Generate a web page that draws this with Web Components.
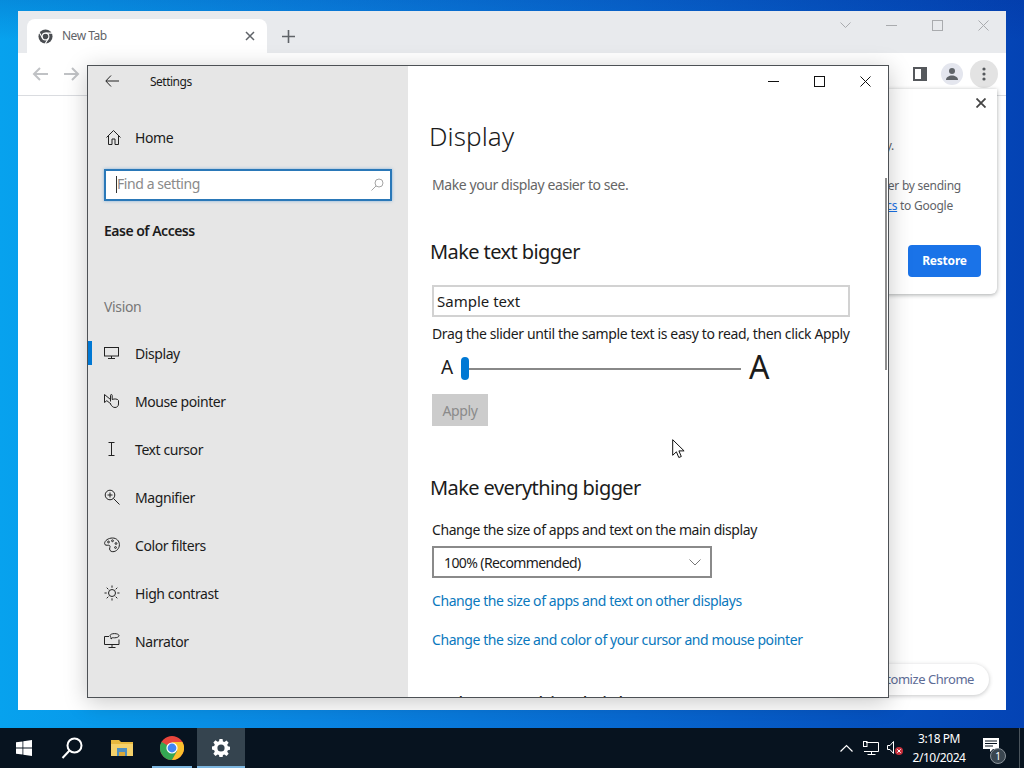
<!DOCTYPE html>
<html lang="en">
<head>
<meta charset="utf-8">
<title>Settings</title>
<style>
  html, body { margin: 0; padding: 0; }
  body { font-family: "Noto Sans", "Open Sans", sans-serif; }
</style>
</head>
<body>
<desk-top>
  <chrome-window></chrome-window>
  <settings-window>
    <nav-item label="Display" active>
      <svg slot="icon" width="15" height="16" viewBox="0 0 15 16" fill="none" stroke="#222"><rect x=".5" y="2.500" width="14" height="8.500"/><path d="M7.500 11v3M4 13.500h7"/></svg>
    </nav-item>
    <nav-item label="Mouse pointer">
      <svg slot="icon" width="16" height="16" viewBox="0 0 16 16" fill="none" stroke="#222"><path d="M.5 1.500v8l2.300-1.800 4.200 3.300"/><path d="M.5 1.500l6 5"/><path d="M6.500 8.500V2.400c0-1.200 1.700-1.200 1.700 0V6.500c2-1 5.800-.6 6.300 1v3.500c0 2.200-1.600 3.500-3.500 3.500-2.400 0-3.500-1.800-4.500-3.500"/></svg>
    </nav-item>
    <nav-item label="Text cursor">
      <svg slot="icon" width="15" height="16" viewBox="0 0 15 16" fill="none" stroke="#222"><path d="M4.500 1.500h6M4.500 14.500h6M7.500 1.500v13"/></svg>
    </nav-item>
    <nav-item label="Magnifier">
      <svg slot="icon" width="16" height="16" viewBox="0 0 16 16" fill="none" stroke="#222"><circle cx="6" cy="6" r="4.800"/><path d="M9.500 9.500l6 6M6 3.500v5M3.500 6h5"/></svg>
    </nav-item>
    <nav-item label="Color filters">
      <svg slot="icon" width="16" height="16" viewBox="0 0 16 16" fill="none" stroke="#222"><path d="M8.500 1C4.500 1 .6 3.500.6 6.500c0 2 2.300 1.800 3.700 1.700 1.500 0 2.200 1 1.500 2.500-.8 1.800.4 4 3 4 3.500 0 6.600-3.200 6.600-7S12.500 1 8.500 1z"/><circle cx="4.500" cy="5" r=".9"/><circle cx="8.500" cy="3.800" r=".9"/><circle cx="12" cy="6.500" r=".9"/><circle cx="11.500" cy="10.500" r=".9"/></svg>
    </nav-item>
    <nav-item label="High contrast">
      <svg slot="icon" width="16" height="16" viewBox="0 0 16 16" fill="none" stroke="#222"><circle cx="8" cy="8" r="3.500"/><path d="M8 .5v2.200M8 13.300v2.200M.5 8h2.200M13.300 8h2.200M2.700 2.700l1.600 1.600M11.700 11.700l1.600 1.600M13.300 2.700l-1.600 1.600M4.300 11.700l-1.600 1.600"/></svg>
    </nav-item>
    <nav-item label="Narrator">
      <svg slot="icon" width="16" height="16" viewBox="0 0 16 16" fill="none" stroke="#222"><path d="M5 3.500H.5v8h14.500V6.500M8 11.500v3M4.500 14.500h7"/><path d="M6 2.700C6 1.500 8 .6 10.500.6s4.500.9 4.500 2.100-2 2.100-4.500 2.100c-.6 0-1.200 0-1.700-.2L7 6V4.200C6.400 3.800 6 3.300 6 2.700z"/></svg>
    </nav-item>
  </settings-window>
  <task-bar></task-bar>
  <svg class="pointer" width="14" height="20" viewBox="0 0 14 20" style="position:absolute;left:672px;top:439px"><path d="M.7.700v15.600l3.700-3.500 2.400 5.700 2.500-1-2.400-5.600h5.200z" fill="#fff" stroke="#111" stroke-width="1"/></svg>
</desk-top>

<script>
class DeskTop extends HTMLElement {
  constructor() {
    super();
    this._shadowRoot = this.attachShadow({ mode: "open" });
  }
  connectedCallback() {
    this._shadowRoot.innerHTML = `
    <style>
      :host {
        display: block;
        position: relative;
        width: 1024px;
        height: 768px;
        overflow: hidden;
        background:
          linear-gradient(180deg, rgba(0,40,140,.18), rgba(0,40,140,0) 40px),
          linear-gradient(90deg, #07a2ee 0%, #0a86e2 30%, #0868d0 62%, #0443b4 100%);
      }
    </style>
    <slot></slot>
    `;
  }
}

class ChromeWindow extends HTMLElement {
  constructor() {
    super();
    this._shadowRoot = this.attachShadow({ mode: "open" });
  }
  connectedCallback() {
    this._shadowRoot.innerHTML = `
    <style>
      :host {
        position: absolute;
        left: 18px;
        top: 11px;
        width: 988px;
        height: 699px;
        display: flex;
        flex-direction: column;
        background: #fff;
        font-family: "Noto Sans", sans-serif;
      }
      .strip {
        height: 42px;
        background: #e8eaed;
        display: flex;
        align-items: flex-end;
        padding-left: 9px;
        box-sizing: border-box;
      }
      .tab {
        width: 240px;
        height: 34px;
        background: #fff;
        border-radius: 8px 8px 0 0;
        display: flex;
        align-items: center;
        padding: 0 12px 0 11px;
        box-sizing: border-box;
        gap: 9px;
        font-size: 12px;
        letter-spacing: -.5px;
        color: #5f6368;
      }
      .tab span { flex: 1; padding-bottom: 2px; }
      .plus { margin: 0 0 0 15px; align-self: center; position: relative; top: 4px; display: flex; }
      .caption {
        margin-left: auto;
        align-self: flex-start;
        display: flex;
      }
      .caption div { width: 46px; height: 28px; display: flex; align-items: center; justify-content: center; }
      .toolbar {
        height: 43px;
        box-sizing: border-box;
        padding: 0 8px 0 14px;
        border-bottom: 1px solid #dadce0;
        display: flex;
        align-items: center;
        gap: 16px;
      }
      .toolbar .right { margin-left: auto; display: flex; align-items: center; }
      .avatar { width: 22px; height: 22px; margin: 0 7px 0 14px; border-radius: 50%; background: #e4e6ee; display: flex; align-items: center; justify-content: center; }
      .menu { width: 28px; height: 28px; border-radius: 50%; background: #e3e3e3; display: flex; align-items: center; justify-content: center; }
      .page { flex: 1; position: relative; }
      .bubble {
        position: absolute;
        right: 9px;
        top: -7px;
        width: 300px;
        height: 205px;
        box-sizing: border-box;
        background: #fff;
        border-radius: 0 0 6px 6px;
        box-shadow: 0 1px 4px rgba(60,64,67,.45);
        font-size: 12px;
        letter-spacing: -.25px;
        line-height: 20px;
        color: #5f6368;
        text-align: right;
        padding: 47px 36px 0 0;
      }
      .bubble .close { position: absolute; right: 11px; top: 9px; display: flex; }
      .bubble p { margin: 0 0 20px; white-space: nowrap; }
      .bubble a { color: #1a73e8; text-decoration: underline; }
      .bubble .second { margin-right: 8px; }
      .restore {
        position: absolute;
        right: 16px;
        top: 156px;
        width: 73px;
        height: 32px;
        border-radius: 4px;
        background: #1a73e8;
        color: #fff;
        font-size: 12px;
        font-weight: 700;
        letter-spacing: -.2px;
        display: flex;
        align-items: center;
        justify-content: center;
      }
      .customize {
        position: absolute;
        right: 17px;
        bottom: 15px;
        height: 31px;
        padding: 0 15px 2px 40px;
        box-sizing: border-box;
        display: flex;
        align-items: center;
        border-radius: 16px;
        background: #fff;
        box-shadow: 0 1px 4px rgba(60,64,67,.3);
        color: #5d6c96;
        font-size: 13px;
        letter-spacing: -.45px;
      }
    </style>
    <div class="strip">
      <div class="tab">
        <svg width="15" height="15" viewBox="0 0 16 16"><circle cx="8" cy="8" r="7.500" fill="#4a4d51"/><circle cx="8" cy="8" r="3.600" fill="#4a4d51" stroke="#fff" stroke-width="1.200"/><path d="M8 4.400h7M4.900 9.800L1.400 3.700M11.100 9.800l-3.500 6" stroke="#fff" stroke-width="1.200"/></svg>
        <span>New Tab</span>
        <svg width="10" height="10" viewBox="0 0 10 10" stroke="#5f6368" stroke-width="1.500"><path d="M1 1l8 8M9 1l-8 8"/></svg>
      </div>
      <div class="plus"><svg width="13" height="13" viewBox="0 0 13 13" stroke="#5f6368" stroke-width="1.600"><path d="M6.500 0v13M0 6.500h13"/></svg></div>
      <div class="caption">
        <div><svg width="11" height="7" viewBox="0 0 11 7" fill="none" stroke="#a9abae"><path d="M.5.500l5 5 5-5"/></svg></div>
        <div><svg width="11" height="1" stroke="#a9abae"><path d="M0 .5h11"/></svg></div>
        <div><svg width="11" height="11" fill="none" stroke="#a9abae"><rect x=".5" y=".5" width="10" height="10"/></svg></div>
        <div><svg width="11" height="11" stroke="#a9abae"><path d="M.5.500l10 10M10.500.500l-10 10"/></svg></div>
      </div>
    </div>
    <div class="toolbar">
      <svg width="16" height="14" viewBox="0 0 16 14" fill="none" stroke="#c0c2c5" stroke-width="2"><path d="M16 7H2M8 1L2 7l6 6"/></svg>
      <svg width="16" height="14" viewBox="0 0 16 14" fill="none" stroke="#c0c2c5" stroke-width="2"><path d="M0 7h14M8 1l6 6-6 6"/></svg>
      <div class="right">
        <svg width="14" height="14" viewBox="0 0 14 14" fill="#fff" stroke="#55585c" stroke-width="2"><rect x="1" y="1" width="12" height="12"/><rect x="9" y="1" width="4" height="12" fill="#55585c"/></svg>
        <div class="avatar"><svg width="14" height="14" viewBox="0 0 14 14" fill="#5f6368"><circle cx="7" cy="4" r="3"/><path d="M1 13c0-3 3-4.500 6-4.500s6 1.500 6 4.500z"/></svg></div>
        <div class="menu"><svg width="4" height="14" viewBox="0 0 4 14" fill="#55585c"><circle cx="2" cy="2" r="1.600"/><circle cx="2" cy="7" r="1.600"/><circle cx="2" cy="12" r="1.600"/></svg></div>
      </div>
    </div>
    <div class="page">
      <div class="bubble">
        <div class="close"><svg width="10" height="10" viewBox="0 0 10 10" stroke="#444" stroke-width="1.800"><path d="M.5.500l9 9M9.500.500l-9 9"/></svg></div>
        <p style="margin-right:67px">Chrome didn't shut down correctly.</p>
        <p>Help make Chrome better by sending<br><span class="second"><a>usage statistics</a> to Google</span></p>
        <div class="restore">Restore</div>
      </div>
      <div class="customize">Customize Chrome</div>
    </div>
    `;
  }
}

class SettingsWindow extends HTMLElement {
  constructor() {
    super();
    this._shadowRoot = this.attachShadow({ mode: "open" });
  }
  connectedCallback() {
    this._shadowRoot.innerHTML = `
    <style>
      :host {
        position: absolute;
        left: 87px;
        top: 65px;
        width: 802px;
        height: 633px;
        box-sizing: border-box;
        border: 1px solid #4d5155;
        display: flex;
        background: #fff;
        box-shadow: 0 4px 22px rgba(0,0,0,.22);
        font-family: "Noto Sans", sans-serif;
        color: #1b1b1b;
        letter-spacing: -.42px;
      }
      .side {
        width: 320px;
        background: #e6e6e6;
        display: flex;
        flex-direction: column;
        flex: none;
      }
      .head { height: 31px; display: flex; align-items: center; padding-left: 17px; font-size: 12px; letter-spacing: -.5px; }
      .head svg { margin-bottom: 1px; }
      .head span { margin-left: 31px; }
      .home { height: 40px; margin-top: 20px; display: flex; align-items: center; padding-left: 18px; gap: 14px; font-size: 14px; }
      .search {
        margin: 12px 16px 0;
        height: 32px;
        box-sizing: border-box;
        border: 2px solid #2a78b8;
        background: #fff;
        box-shadow: 0 0 3px rgba(40,130,210,.5);
        display: flex;
        align-items: center;
        padding: 0 6px 2px 10px;
        color: #8a8a8a;
        font-size: 14px;
      }
      .search i { width: 1px; height: 17px; background: #333; }
      .search span { flex: 1; padding-bottom: 2px; }
      .group { margin: 20px 16px 0; font-size: 14px; font-weight: 600; letter-spacing: -.5px; height: 20px; line-height: 20px; }
      .vision { margin: 56px 16px 0; font-size: 14px; letter-spacing: -.35px; color: #777; height: 20px; line-height: 20px; }
      .nav { margin-top: 12px; }
      .main { flex: 1; position: relative; overflow: hidden; }
      .caption { position: absolute; right: 0; top: 0; display: flex; }
      .caption div { width: 46px; height: 30px; display: flex; align-items: center; justify-content: center; }
      .scroll { position: absolute; right: 1px; top: 112px; width: 2px; height: 192px; background: #8d8d8d; }
      .body { padding: 46px 0 0 24px; }
      h1 { margin: 0 0 0 -3px; font-size: 26px; font-weight: 300; letter-spacing: .1px; line-height: 48px; height: 48px; }
      .lead { margin: 15px 0 0; font-size: 14px; line-height: 20px; color: #666; }
      h2 { margin: 0 0 0 -2px; font-size: 20px; font-weight: 400; letter-spacing: -.58px; line-height: 28px; }
      .first { margin-top: 43px; }
      .sample { width: 418px; height: 32px; box-sizing: border-box; border: 2px solid #d2d2d2; margin-top: 19px; padding-left: 3px; display: flex; align-items: center; font-size: 15px; letter-spacing: 0; }
      .hint { margin: 7px 0 0; font-size: 14px; letter-spacing: -.37px; line-height: 20px; white-space: nowrap; }
      .slider { display: flex; align-items: center; height: 36px; margin-top: 6px; }
      .small { width: 29px; padding: 0 0 3px 9px; box-sizing: border-box; font-size: 19px; letter-spacing: 0; }
      .thumb { width: 8px; height: 23px; border-radius: 4px; background: #0078d4; flex: none; }
      .track { width: 272px; height: 2px; margin-top: 1px; background: #888; }
      .big { font-size: 32px; margin-left: 8px; padding-bottom: 2px; line-height: 36px; letter-spacing: 0; }
      .apply { width: 56px; height: 32px; margin-top: 8px; background: #ccc; color: #8a8a8a; font-size: 14px; display: flex; align-items: center; justify-content: center; }
      .second { margin-top: 48px; }
      .label { margin: 18px 0 0; font-size: 14px; line-height: 20px; }
      .select { width: 280px; height: 32px; box-sizing: border-box; border: 2px solid #8a8a8a; margin-top: 6px; display: flex; align-items: center; justify-content: space-between; padding: 0 9px 0 10px; font-size: 14px; letter-spacing: -.6px; }
      a { display: block; color: #0a78bd; font-size: 14px; line-height: 20px; text-decoration: none; }
      .third { margin-top: 40px; }
    </style>
    <div class="side">
      <div class="head">
        <svg width="14" height="12" viewBox="0 0 14 12" fill="none" stroke="#222"><path d="M14 6H1M6 .5L.8 6 6 11.500"/></svg>
        <span>Settings</span>
      </div>
      <div class="home">
        <svg width="15" height="15" viewBox="0 0 15 15" fill="none" stroke="#222"><path d="M.5 7.500l7-7 7 7M2.500 6v8.500h3.500V9h3v5.500h3.500V6"/></svg>
        <span>Home</span>
      </div>
      <div class="search">
        <i></i><span>Find a setting</span>
        <svg width="13" height="13" viewBox="0 0 13 13" fill="none" stroke="#a5a5a5"><circle cx="8" cy="5" r="4"/><path d="M5 8l-4.500 4.500"/></svg>
      </div>
      <div class="group">Ease of Access</div>
      <div class="vision">Vision</div>
      <div class="nav"><slot></slot></div>
    </div>
    <div class="main">
      <div class="body">
        <h1>Display</h1>
        <p class="lead">Make your display easier to see.</p>
        <h2 class="first">Make text bigger</h2>
        <div class="sample">Sample text</div>
        <p class="hint">Drag the slider until the sample text is easy to read, then click Apply</p>
        <div class="slider">
          <span class="small">A</span><span class="thumb"></span><span class="track"></span><span class="big">A</span>
        </div>
        <div class="apply">Apply</div>
        <h2 class="second">Make everything bigger</h2>
        <p class="label">Change the size of apps and text on the main display</p>
        <div class="select">
          <span>100% (Recommended)</span>
          <svg width="12" height="7" viewBox="0 0 12 7" fill="none" stroke="#777"><path d="M.5.500l5.500 5.500 5.500-5.500"/></svg>
        </div>
        <a style="margin-top:13px">Change the size of apps and text on other displays</a>
        <a style="margin-top:19px">Change the size and color of your cursor and mouse pointer</a>
        <h2 class="third">Make everything brighter</h2>
      </div>
      <div class="scroll"></div>
      <div class="caption">
        <div><svg width="11" height="1"><path d="M0 .5h11" stroke="#111"/></svg></div>
        <div><svg width="11" height="11" fill="none" stroke="#111"><rect x=".5" y=".5" width="10" height="10"/></svg></div>
        <div><svg width="11" height="11" stroke="#111"><path d="M.5.500l10 10M10.500.500l-10 10"/></svg></div>
      </div>
    </div>
    `;
  }
}

class NavItem extends HTMLElement {
  constructor() {
    super();
    this._shadowRoot = this.attachShadow({ mode: "open" });
  }
  connectedCallback() {
    this._shadowRoot.innerHTML = `
    <style>
      :host {
        display: flex;
        align-items: center;
        height: 48px;
        font-size: 14px;
        padding-left: 16px;
        position: relative;
      }
      :host([active])::before {
        content: "";
        position: absolute;
        left: 0;
        top: 12px;
        width: 4px;
        height: 24px;
        background: #0078d4;
      }
      .ic { width: 31px; flex: none; display: flex; }
    </style>
    <span class="ic"><slot name="icon"></slot></span>
    <span>${this.getAttribute("label")}</span>
    `;
  }
}

class TaskBar extends HTMLElement {
  constructor() {
    super();
    this._shadowRoot = this.attachShadow({ mode: "open" });
  }
  connectedCallback() {
    this._shadowRoot.innerHTML = `
    <style>
      :host {
        position: absolute;
        left: 0;
        bottom: 0;
        width: 1024px;
        height: 40px;
        background: #07131f;
        display: flex;
        color: #fff;
        font-family: "Noto Sans", sans-serif;
      }
      .btn { width: 50px; height: 40px; flex: none; display: flex; align-items: center; justify-content: center; box-sizing: border-box; position: relative; }
      .start { width: 47px; padding-left: 1px; }
      .chrome::after { content: ""; position: absolute; left: 5px; right: 5px; bottom: 0; height: 2px; background: #7cb6e0; }
      .on { width: 48px; background: #35444f; }
      .on::after { content: ""; position: absolute; left: 0; right: 0; bottom: 0; height: 2px; background: #7cb6e0; }
      .tray { margin-left: auto; display: flex; align-items: center; margin-right: 4px; }
      .clock { width: 72px; text-align: center; font-size: 12px; letter-spacing: -.45px; line-height: 19px; padding-bottom: 1px; }
      .note { position: relative; width: 45px; height: 40px; display: flex; align-items: center; padding-left: 8px; padding-bottom: 5px; border-right: 1px solid #4a545c; box-sizing: border-box; }
      .count { position: absolute; left: 15px; top: 20px; width: 16px; height: 16px; border-radius: 50%; background: #3a4650; border: 1px solid #8a939a; box-sizing: border-box; font-size: 10px; letter-spacing: 0; line-height: 14px; text-align: center; }
    </style>
    <div class="btn start"><svg width="16" height="16" viewBox="0 0 16 16" fill="#fff"><path d="M0 2.300l6.500-.9v6.200H0zM7.300 1.300L16 0v7.600H7.300zM0 8.400h6.500v6.200L0 13.700zM7.300 8.400H16V16l-8.700-1.300z"/></svg></div>
    <div class="btn"><svg width="22" height="22" viewBox="0 0 22 22" fill="none" stroke="#fff" stroke-width="2"><circle cx="13.500" cy="8.500" r="7"/><path d="M8.500 13.500L1.500 21"/></svg></div>
    <div class="btn"><svg width="22" height="18" viewBox="0 0 22 18"><path d="M0 1h8l2 2h12v14H0z" fill="#e8b93f"/><path d="M0 5h22v12H0z" fill="#f5d16a"/><path d="M6 9h10v8h-2v-4H8v4H6z" fill="#4f8fc0"/><path d="M8 13h6v4H8z" fill="#d9a93a"/></svg></div>
    <div class="btn chrome"><svg width="24" height="24" viewBox="0 0 24 24"><circle cx="12" cy="12" r="12" fill="#e8453c"/><path d="M12 12L1.600 6A12 12 0 0 0 12 24l5.200-9z" fill="#34a853"/><path d="M12 6h10.400A12 12 0 0 1 12 24l5.200-9z" fill="#fbc02d"/><circle cx="12" cy="12" r="5.600" fill="#fff"/><circle cx="12" cy="12" r="4.400" fill="#4285f4"/></svg></div>
    <div class="btn on"><svg width="18" height="18" viewBox="0 0 20 20"><path fill="#fff" fill-rule="evenodd" d="M8.300 0h3.400l.5 2.700 1.600.7 2.300-1.600 2.400 2.400-1.600 2.300.7 1.600 2.400.5v3.400l-2.400.5-.7 1.600 1.600 2.300-2.400 2.400-2.300-1.600-1.600.7-.5 2.700H8.300l-.5-2.700-1.600-.7-2.300 1.600-2.400-2.400 1.600-2.300-.7-1.600L0 11.700V8.300l2.400-.5.700-1.600-1.600-2.300 2.400-2.400 2.300 1.600 1.600-.7zM10 6a4 4 0 1 0 0 8 4 4 0 0 0 0-8z"/></svg></div>
    <div class="tray">
      <svg width="13" height="8" viewBox="0 0 13 8" fill="none" stroke="#fff" stroke-width="1.200"><path d="M.5 7.500l6-6 6 6"/></svg>
      <svg style="margin-left:10px" width="16" height="14" viewBox="0 0 16 14" fill="none" stroke="#fff"><path d="M3 1.500h12.500v9H1M8.500 10.500v3M4.500 13.500h8"/><rect x=".5" y=".5" width="3.500" height="5"/></svg>
      <svg style="margin-left:8px" width="16" height="16" viewBox="0 0 16 16"><path d="M.5 5.500h2.500l3.500-4v12l-3.500-4H.5z" fill="none" stroke="#fff"/><circle cx="12" cy="11" r="4" fill="#c8303c"/><path d="M10.300 9.300l3.400 3.400M13.700 9.300l-3.400 3.400" stroke="#fff"/></svg>
      <div class="clock">3:18 PM<br>2/10/2024</div>
      <div class="note">
        <svg width="16" height="15" viewBox="0 0 16 15"><path d="M0 0h16v11h-6l-3 3v-3H0z" fill="#fff"/><path d="M2 3h12M2 5.500h12M2 8h8" stroke="#07131f"/></svg>
        <span class="count">1</span>
      </div>
    </div>
    `;
  }
}

customElements.define("desk-top", DeskTop);
customElements.define("chrome-window", ChromeWindow);
customElements.define("settings-window", SettingsWindow);
customElements.define("nav-item", NavItem);
customElements.define("task-bar", TaskBar);
</script>
</body>
</html>
